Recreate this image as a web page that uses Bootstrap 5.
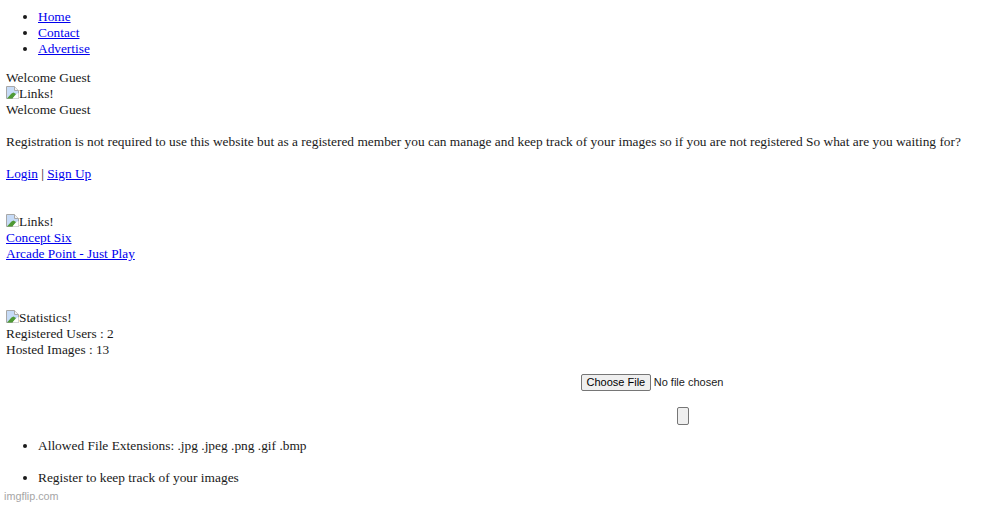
<!DOCTYPE html>
<html lang="en">
<head>
<meta charset="utf-8">
<title>Welcome Guest</title>
<link href="https://cdn.jsdelivr.net/npm/bootstrap@5.3.0/dist/css/bootstrap.min.css" rel="stylesheet">
<style>
html, body { height: 505px; overflow: hidden; }
body { font-family: "Liberation Serif", serif; font-size: 13.33px; line-height: 16px; color: #1a1a1a; background: #fff; padding: 9px 6px 0; position: relative; }
a { color: #0000ee; }
.top-menu { margin: 0 0 13px; padding-left: 32px; }
.line-gap { height: 16px; }
.sec-gap { height: 32px; }
.stat-gap { height: 48px; }
.wide-line { font-size: 13.39px; }
.broken-ico { display: inline-block; width: 13px; height: 13px; vertical-align: -1px; }
.upload-zone { margin-top: 16px; font-family: "Liberation Sans", sans-serif; font-size: 11px; }
.upload-file { display: block; width: 200px; margin-left: 575px; font-size: 11px; line-height: 13px; }
.upload-file::file-selector-button { height: 17px; padding: 0 4.5px; margin-right: 3px; border: 1px solid #767676; border-radius: 2px; background: #efefef; font-size: 11px; }
.upload-btn { display: block; width: 12px; height: 18px; margin: 16px 0 0 671px; padding: 0; border: 1px solid #767676; border-radius: 2px; background: #efefef; }
.rules { margin: 13px 0 0; padding-left: 32px; font-size: 13.4px; }
.rules li { margin-bottom: 16px; }
.wmark { position: absolute; left: 4px; bottom: 2px; font-family: "Liberation Sans", sans-serif; font-size: 10.8px; line-height: 13px; color: #a6a6a6; }
</style>
</head>
<body>
<svg width="0" height="0" class="position-absolute" aria-hidden="true"><symbol id="brokenpic" viewBox="0 0 13 13"><path d="M.5.5h8l4 4v8H.5z" fill="#fff" stroke="#a8a8a8"/><path d="M1 1h7.5v3.5H12V7L6 12H1z" fill="#c6dbf7"/><path d="M8.5.5v4h4" fill="#f2f2f2" stroke="#a8a8a8"/><path d="M1 12.5l4.5-5 2-1L10 8l-3.500 4.500z" fill="#4f9a35"/><path d="M6.500 12.500L12.500 7v5.500z" fill="#fff"/></symbol></svg>
<ul class="top-menu">
  <li><a href="#">Home</a></li>
  <li><a href="#">Contact</a></li>
  <li><a href="#">Advertise</a></li>
</ul>
<div>Welcome Guest</div>
<div><svg class="broken-ico" role="img" aria-label="broken image"><use href="#brokenpic"/></svg>Links!</div>
<div>Welcome Guest</div>
<div class="line-gap"></div>
<div class="wide-line">Registration is not required to use this website but as a registered member you can manage and keep track of your images so if you are not registered So what are you waiting for?</div>
<div class="line-gap"></div>
<div><a href="#">Login</a> | <a href="#">Sign Up</a></div>
<div class="sec-gap"></div>
<div><svg class="broken-ico" role="img" aria-label="broken image"><use href="#brokenpic"/></svg>Links!</div>
<div><a href="#">Concept Six</a></div>
<div><a href="#">Arcade Point - Just Play</a></div>
<div class="stat-gap"></div>
<div><svg class="broken-ico" role="img" aria-label="broken image"><use href="#brokenpic"/></svg>Statistics!</div>
<div>Registered Users : 2</div>
<div>Hosted Images : 13</div>
<form class="upload-zone">
  <input class="upload-file" type="file">
  <button class="upload-btn" type="button" aria-label="Upload"></button>
</form>
<ul class="rules">
  <li>Allowed File Extensions: .jpg .jpeg .png .gif .bmp</li>
  <li>Register to keep track of your images</li>
</ul>
<div class="wmark">imgflip.com</div>
<script src="https://cdn.jsdelivr.net/npm/bootstrap@5.3.0/dist/js/bootstrap.bundle.min.js"></script>
</body>
</html>
